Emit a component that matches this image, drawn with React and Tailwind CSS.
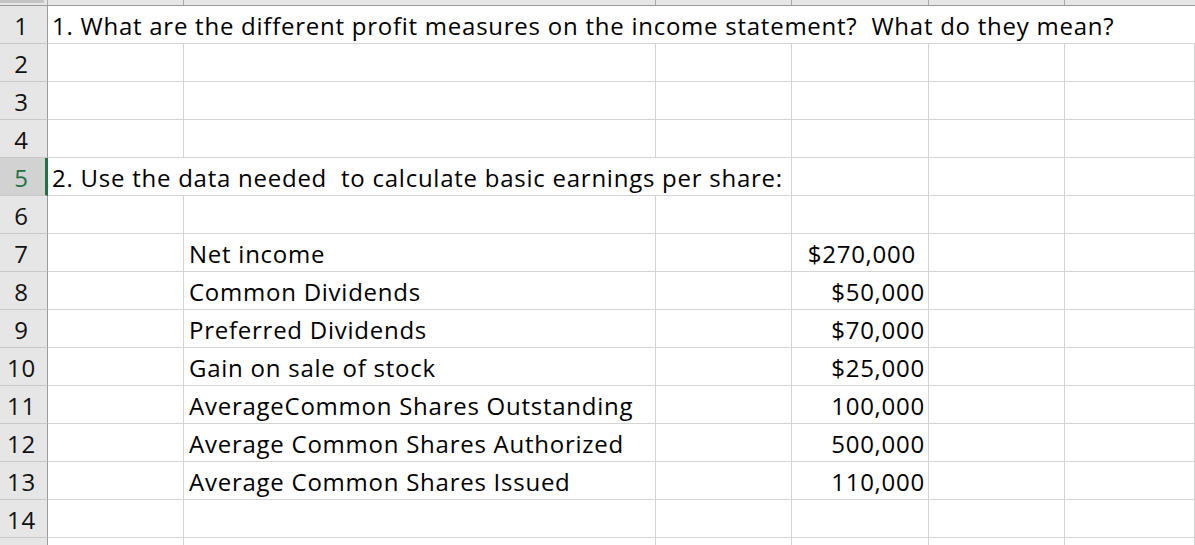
const font = { fontFamily: '"Open Sans", Lato, sans-serif' }

const rows = [
  { n: 1, kind: 'wide', text: '1. What are the different profit measures on the income statement?  What do they mean?' },
  { n: 2 },
  { n: 3 },
  { n: 4 },
  { n: 5, kind: 'question', text: '2. Use the data needed  to calculate basic earnings per share:', selected: true },
  { n: 6 },
  { n: 7, label: 'Net income', value: '$270,000', pad: true },
  { n: 8, label: 'Common Dividends', value: '$50,000' },
  { n: 9, label: 'Preferred Dividends', value: '$70,000' },
  { n: 10, label: 'Gain on sale of stock', value: '$25,000' },
  { n: 11, label: 'AverageCommon Shares Outstanding', value: '100,000' },
  { n: 12, label: 'Average Common Shares Authorized', value: '500,000' },
  { n: 13, label: 'Average Common Shares Issued', value: '110,000' },
  { n: 14 },
  { n: '' },
]

function RowHeader({ n, selected }) {
  if (selected) {
    return (
      <div className="flex h-full w-[48px] shrink-0 items-end justify-center border-r-[3px] border-b border-r-[#217346] border-b-[#c8c8c8] bg-[#d2d2d2] pb-[5px] pr-[2px] text-[#217346]">
        {n}
      </div>
    )
  }
  return (
    <div className="flex h-full w-[48px] shrink-0 items-end justify-center border-r border-b border-r-[#9b9b9b] border-b-[#c8c8c8] bg-[#e6e6e6] pb-[5px] pr-[4px] text-[#111]">
      {n}
    </div>
  )
}

function Cell({ w, children, className = '' }) {
  return (
    <div className={`flex h-full shrink-0 items-end border-r border-b border-[#d4d4d4] pb-[5px] ${w} ${className}`}>
      {children}
    </div>
  )
}

function Row({ row }) {
  return (
    <div className="flex h-[38px] w-[1195px] text-[24px] leading-none tracking-[0.75px] text-black">
      <RowHeader n={row.n} selected={row.selected} />
      {row.kind === 'wide' && (
        <div className="flex h-full flex-1 items-end whitespace-pre border-b border-[#d4d4d4] pb-[5px] pl-[4px]">
          {row.text}
        </div>
      )}
      {row.kind === 'question' && (
        <>
          <Cell w="w-[744px]" className="whitespace-pre pl-[4px]">{row.text}</Cell>
          <Cell w="w-[137px]" />
          <Cell w="w-[136px]" />
          <Cell w="flex-1" />
        </>
      )}
      {!row.kind && (
        <>
          <Cell w="w-[136px]" />
          <Cell w="w-[472px]" className="whitespace-pre pl-[5px]">{row.label}</Cell>
          <Cell w="w-[136px]" />
          <Cell w="w-[137px]" className={`justify-end whitespace-pre ${row.pad ? 'pr-[12px]' : 'pr-[3px]'}`}>
            {row.value}
          </Cell>
          <Cell w="w-[136px]" />
          <Cell w="flex-1" />
        </>
      )}
    </div>
  )
}

function TopStrip() {
  const cols = ['w-[136px]', 'w-[472px]', 'w-[136px]', 'w-[137px]', 'w-[136px]']
  return (
    <div className="flex h-[6px] w-[1195px] border-b border-[#9b9b9b] bg-[#e6e6e6]">
      <div className="h-full w-[48px] shrink-0 border-r border-[#ababab]">
        <div className="h-[3px] w-[44px] bg-[#c4c4c4]" />
      </div>
      {cols.map((c, i) => (
        <div key={i} className={`h-full shrink-0 border-r border-[#ababab] ${c}`} />
      ))}
      <div className="h-full flex-1" />
    </div>
  )
}

export default function App() {
  return (
    <div className="h-[545px] w-[1195px] overflow-hidden bg-white" style={font}>
      <TopStrip />
      {rows.map((r, i) => (
        <Row key={i} row={r} />
      ))}
    </div>
  )
}
